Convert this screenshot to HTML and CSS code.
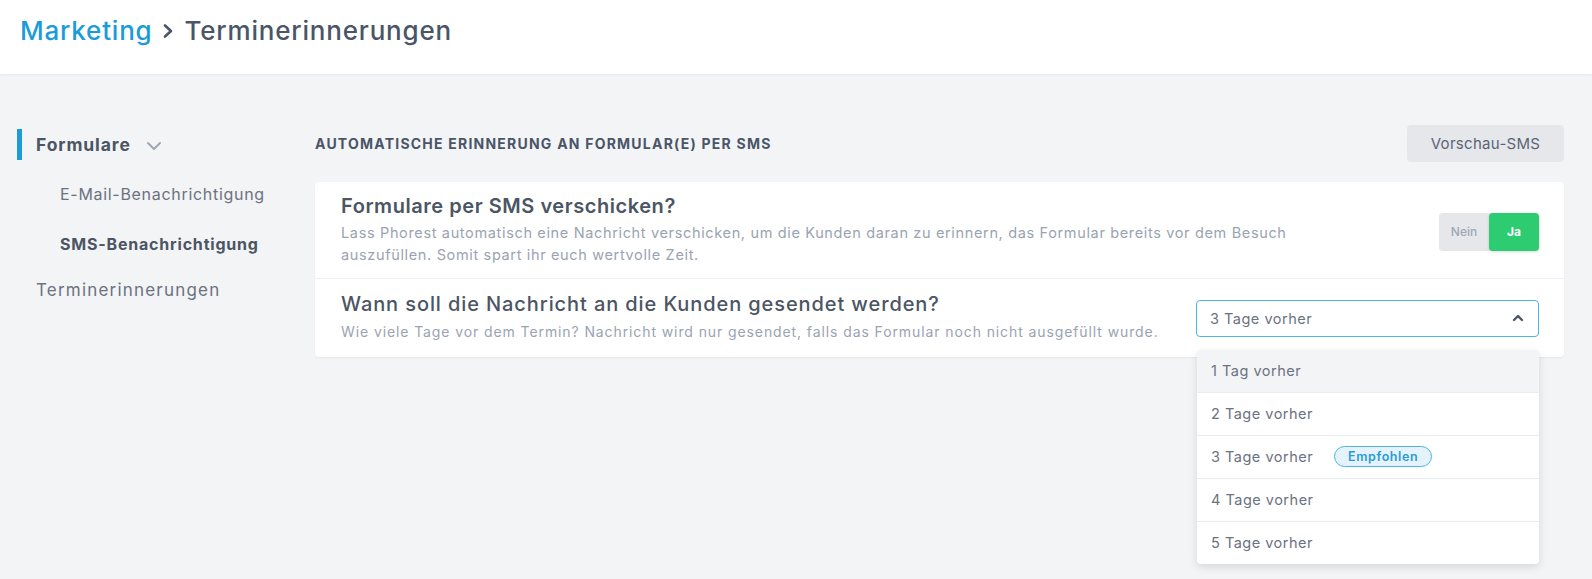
FILE: index.html
```html
<!DOCTYPE html>
<html lang="de">
<head>
<meta charset="utf-8">
<title>Terminerinnerungen</title>
<link rel="stylesheet" href="styles.css">
</head>
<body>
<header class="topbar">
  <h1 class="crumbs"><span class="crumb-link">Marketing</span>
    <svg class="crumb-sep" width="14" height="16" viewBox="0 0 14 16"><path d="M4 2.5 L10 8 L4 13.5" fill="none" stroke="#4a5568" stroke-width="2.6" stroke-linecap="round" stroke-linejoin="round"/></svg>
    <span class="crumb-current">Terminerinnerungen</span></h1>
</header>
<div class="layout">
  <nav class="sidebar">
    <div class="nav-group active">
      <span>Formulare</span>
      <svg class="nav-chev" width="16" height="10" viewBox="0 0 16 10"><path d="M2 2 L8 8 L14 2" fill="none" stroke="#a0a7b4" stroke-width="2" stroke-linecap="round" stroke-linejoin="round"/></svg>
    </div>
    <div class="nav-sub">E-Mail-Benachrichtigung</div>
    <div class="nav-sub current">SMS-Benachrichtigung</div>
    <div class="nav-item">Terminerinnerungen</div>
  </nav>
  <main class="main">
    <div class="section-head">
      <h2 class="section-title">Automatische Erinnerung an Formular(e) per SMS</h2>
      <button class="btn-preview">Vorschau-SMS</button>
    </div>
    <div class="card">
      <div class="row row-first">
        <div class="row-text">
          <div class="row-title">Formulare per SMS verschicken?</div>
          <div class="row-desc">Lass Phorest automatisch eine Nachricht verschicken, um die Kunden daran zu erinnern, das Formular bereits vor dem Besuch auszufüllen. Somit spart ihr euch wertvolle Zeit.</div>
        </div>
        <div class="toggle">
          <span class="toggle-off">Nein</span>
          <span class="toggle-on">Ja</span>
        </div>
      </div>
      <div class="row row-second">
        <div class="row-text">
          <div class="row-title">Wann soll die Nachricht an die Kunden gesendet werden?</div>
          <div class="row-desc">Wie viele Tage vor dem Termin? Nachricht wird nur gesendet, falls das Formular noch nicht ausgefüllt wurde.</div>
        </div>
        <div class="select-wrap">
          <div class="select">
            <span>3 Tage vorher</span>
            <svg class="select-chev" width="12" height="8" viewBox="0 0 12 8"><path d="M2 6 L6 2 L10 6" fill="none" stroke="#4a5568" stroke-width="2.4" stroke-linecap="round" stroke-linejoin="round"/></svg>
          </div>
          <ul class="dropdown">
            <li class="opt hover">1 Tag vorher</li>
            <li class="opt">2 Tage vorher</li>
            <li class="opt">3 Tage vorher <span class="badge">Empfohlen</span></li>
            <li class="opt">4 Tage vorher</li>
            <li class="opt">5 Tage vorher</li>
          </ul>
        </div>
      </div>
    </div>
  </main>
</div>
</body>
</html>
```
FILE: styles.css
```css
* { box-sizing: border-box; }
html, body { margin: 0; padding: 0; }
body {
  background: #f3f4f6;
  font-family: "Inter", "Noto Sans", sans-serif;
  color: #4a5568;
  height: 579px;
  overflow: hidden;
}
.topbar {
  height: 74px;
  background: #ffffff;
  box-shadow: 0 1px 3px rgba(0,0,0,0.05);
  display: flex;
  align-items: center;
  padding: 0 0 0 20px;
  position: relative;
  z-index: 1;
}
.crumbs {
  margin: 0;
  margin-top: -13px;
  font-size: 26px;
  font-weight: 500;
  display: flex;
  align-items: center;
  letter-spacing: 0.8px;
}
.crumb-link { color: #1b9bd7; }
.crumb-sep { margin: 0 10px 0 8px; }
.crumb-current { color: #4a5568; }

.layout {
  display: flex;
  padding-top: 51px;
}
.sidebar {
  width: 315px;
  flex: none;
  padding-left: 17px;
}
.nav-group {
  display: flex;
  align-items: center;
  height: 31px;
  border-left: 5px solid #1b9bd7;
  padding-left: 14px;
  font-size: 17.5px;
  font-weight: 700;
  color: #4b5563;
  margin-top: 4px;
  letter-spacing: 0.9px;
}
.nav-chev { margin-left: 15px; margin-top: 2px; }
.nav-sub {
  padding-left: 43px;
  font-size: 16px;
  color: #6b7280;
  height: 50px;
  display: flex;
  align-items: center;
  letter-spacing: 0.7px;
}
.nav-group + .nav-sub { margin-top: 9px; }
.nav-sub.current { font-weight: 700; color: #4b5563; letter-spacing: 0.8px; }
.nav-item {
  padding-left: 19px;
  font-size: 17px;
  color: #6b7280;
  height: 42px;
  display: flex;
  align-items: center;
  letter-spacing: 1.2px;
}

.main {
  flex: 1;
  padding-right: 28px;
}
.section-head {
  display: flex;
  align-items: center;
  justify-content: space-between;
  height: 37px;
}
.section-title {
  margin: 0;
  margin-top: -1px;
  font-size: 14px;
  font-weight: 700;
  text-transform: uppercase;
  color: #4a5568;
  letter-spacing: 1.22px;
}
.btn-preview {
  width: 157px;
  height: 37px;
  border: none;
  border-radius: 4px;
  background: #e5e7eb;
  color: #5a6474;
  font-family: inherit;
  font-size: 15px;
  letter-spacing: 0.3px;
  padding: 0;
}
.card {
  margin-top: 20px;
  background: #fff;
  border-radius: 4px;
  box-shadow: 0 1px 2px rgba(0,0,0,0.06);
}
.row {
  display: flex;
  align-items: center;
  justify-content: space-between;
  padding: 0 25px 0 26px;
}
.row-first {
  padding-top: 11px;
  padding-bottom: 12px;
  border-bottom: 1px solid #eef0f3;
}
.row-second {
  padding-top: 12px;
  padding-bottom: 15px;
}
.row-text { max-width: 975px; }
.row-title {
  font-size: 20px;
  font-weight: 600;
  line-height: 26px;
  color: #4b5563;
  letter-spacing: 0.55px;
}
.row-second .row-title { font-weight: 500; letter-spacing: 0.9px; }
.row-desc {
  font-size: 14.5px;
  line-height: 22px;
  color: #9aa3b2;
  margin-top: 3px;
  letter-spacing: 0.65px;
}
.row-second .row-desc { line-height: 20px; margin-top: 5px; font-size: 14px; letter-spacing: 0.9px; }
.toggle {
  display: flex;
  height: 38px;
  border-radius: 4px;
  background: #e5e7eb;
  margin-top: 4px;
}
.toggle-off, .toggle-on {
  width: 50px;
  display: flex;
  align-items: center;
  justify-content: center;
  font-size: 12px;
  font-weight: 500;
}
.toggle-off { color: #a0a7b4; }
.toggle-on {
  background: #2ecc71;
  color: #fff;
  border-radius: 4px;
  font-weight: 700;
  box-shadow: 0 1px 3px rgba(0,0,0,0.15);
}
.select-wrap {
  position: relative;
  width: 343px;
  flex: none;
  margin-top: 3px;
}
.select {
  height: 37px;
  border: 1.5px solid #4db4e3;
  border-radius: 4px;
  display: flex;
  align-items: center;
  justify-content: space-between;
  padding: 0 14px 0 13px;
  font-size: 14.5px;
  color: #6b7280;
  letter-spacing: 0.5px;
}
.dropdown {
  position: absolute;
  left: 1px;
  right: 0;
  top: 50px;
  margin: 0;
  padding: 0;
  list-style: none;
  background: #fff;
  border-radius: 4px;
  box-shadow: 0 3px 8px rgba(0,0,0,0.12);
  z-index: 5;
}
.opt {
  height: 43px;
  display: flex;
  align-items: center;
  padding-left: 14px;
  font-size: 14.5px;
  color: #6b7280;
  border-bottom: 1px solid #e8ecf1;
  letter-spacing: 0.5px;
}
.opt:last-child { border-bottom: none; height: 42px; }
.opt.hover { background: #f3f4f6; border-radius: 4px 4px 0 0; }
.badge {
  margin-left: 21px;
  height: 21px;
  width: 98px;
  border: 1.5px solid #4db4e3;
  background: #e4f3fb;
  color: #2a9bd5;
  border-radius: 11px;
  font-size: 12.5px;
  font-weight: 600;
  letter-spacing: 0.6px;
  display: inline-flex;
  align-items: center;
  justify-content: center;
}
```
